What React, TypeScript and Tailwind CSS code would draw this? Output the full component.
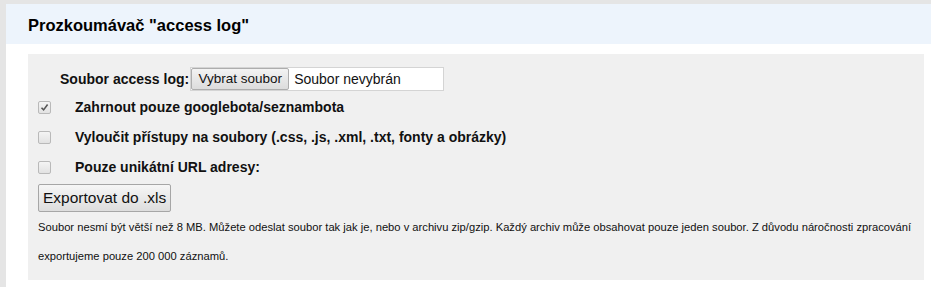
import React from "react";

function Box({ checked }: { checked?: boolean }) {
  return (
    <span className="flex h-[13px] w-[13px] items-center justify-center rounded-[2px] border border-[#b9b9b9] bg-gradient-to-b from-[#f4f4f4] to-[#e2e2e2]">
      {checked && (
        <svg width="9" height="9" viewBox="0 0 9 9">
          <path d="M1.5 4.8 L3.6 6.9 L7.6 1.6" fill="none" stroke="#555" strokeWidth="1.6" />
        </svg>
      )}
    </span>
  );
}

function Option({ label, checked }: { label: string; checked?: boolean }) {
  return (
    <div className="flex h-[30px] items-center">
      <div className="flex w-[47px] pl-[10px]">
        <Box checked={checked} />
      </div>
      <span className="text-[14px] font-bold">{label}</span>
    </div>
  );
}

export default function App() {
  return (
    <div className="h-[287px] overflow-hidden bg-[#e5e5e5] pl-[6px] pt-[4px] font-['Liberation_Sans',Arial,sans-serif] text-[#111]">
      <div className="h-full bg-white">
        <div className="flex h-[40px] items-center bg-[#edf4fc] pl-[22px] pt-[3px]">
          <h1 className="text-[16.5px] font-bold text-black">Prozkoumávač "access log"</h1>
        </div>
        <div className="ml-[22px] mr-[7px] mt-[10px] h-[226px] bg-[#f0f0f0]">
          <div className="flex items-center pl-[32px] pt-[13px]">
            <span className="text-[14px] font-bold">Soubor access log:</span>
            <div className="ml-[1px] flex h-[24px] w-[254px] border border-[#d4d4d4] bg-white">
              <span className="flex w-[98px] items-center justify-center rounded-[2px] border border-[#adadad] bg-gradient-to-b from-[#f3f3f3] to-[#dcdcdc] text-[13.5px]">
                Vybrat soubor
              </span>
              <span className="flex items-center pl-[5px] text-[14px]">Soubor nevybrán</span>
            </div>
          </div>
          <div className="mt-[1px]">
            <Option label="Zahrnout pouze googlebota/seznambota" checked />
            <Option label="Vyloučit přístupy na soubory (.css, .js, .xml, .txt, fonty a obrázky)" />
            <Option label="Pouze unikátní URL adresy:" />
          </div>
          <div className="pl-[10px] pt-[2px]">
            <button className="h-[28px] rounded-[2px] border border-[#a6a6a6] bg-gradient-to-b from-[#f6f6f6] to-[#dddddd] px-[4px] text-[15.5px]">
              Exportovat do .xls
            </button>
          </div>
          <p className="pl-[10px] pr-[4px] pt-[1px] text-[11.2px] leading-[29px]">
            Soubor nesmí být větší než 8 MB. Můžete odeslat soubor tak jak je, nebo v archivu zip/gzip. Každý archiv může obsahovat pouze jeden soubor. Z důvodu náročnosti zpracování exportujeme pouze 200 000 záznamů.
          </p>
        </div>
      </div>
    </div>
  );
}
